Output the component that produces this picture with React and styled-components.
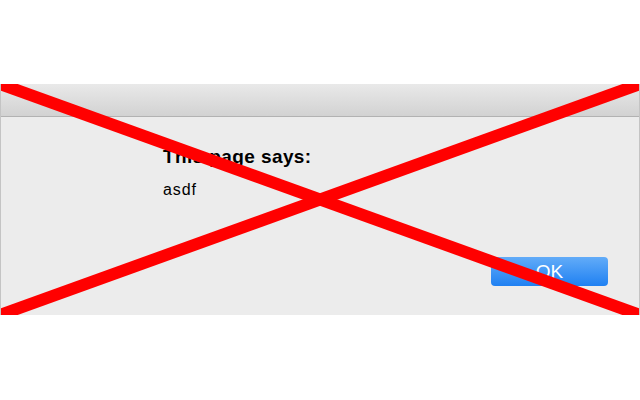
import React from 'react';
import styled, { createGlobalStyle } from 'styled-components';

const GlobalStyle = createGlobalStyle`
  html, body {
    margin: 0;
    padding: 0;
    background: #ffffff;
  }
  body {
    font-family: 'Liberation Sans', Arial, sans-serif;
  }
`;

const Page = styled.div`
  width: 640px;
  height: 400px;
  padding-top: 84px;
  box-sizing: border-box;
`;

const Dialog = styled.div`
  position: relative;
  width: 640px;
  height: 231px;
  display: flex;
  flex-direction: column;
  box-sizing: border-box;
  border-left: 1px solid #c4c4c4;
  border-right: 1px solid #c4c4c4;
  overflow: hidden;
`;

const TitleBar = styled.div`
  height: 32px;
  flex-shrink: 0;
  background: linear-gradient(#e9e9e9, #d2d2d2);
  border-bottom: 1px solid #b2b2b2;
`;

const Body = styled.div`
  flex: 1;
  display: flex;
  flex-direction: column;
  background: #ececec;
  padding: 29px 31px 29px 162px;
`;

const Title = styled.div`
  font-size: 19px;
  line-height: 22px;
  font-weight: 700;
  letter-spacing: 0.4px;
  color: #000000;
`;

const Message = styled.div`
  margin-top: 12px;
  font-size: 16px;
  line-height: 20px;
  letter-spacing: 0.9px;
  color: #000000;
`;

const OkButton = styled.button`
  margin-top: auto;
  align-self: flex-end;
  width: 117px;
  height: 29px;
  border: none;
  border-radius: 4px;
  background: linear-gradient(#62acf8, #1f80f2);
  color: #ffffff;
  font-family: 'Liberation Sans', Arial, sans-serif;
  font-size: 19px;
  line-height: 29px;
  padding: 0;
`;

const Cross = styled.svg`
  position: absolute;
  top: 0;
  left: -1px;
  width: 640px;
  height: 231px;
  pointer-events: none;
`;

export default function App() {
  return (
    <Page>
      <GlobalStyle />
      <Dialog>
        <TitleBar />
        <Body>
          <Title>This page says:</Title>
          <Message>asdf</Message>
          <OkButton>OK</OkButton>
        </Body>
        <Cross viewBox="0 0 640 231">
          <line x1="0" y1="0" x2="640" y2="231" stroke="#ff0000" strokeWidth="12" />
          <line x1="0" y1="231" x2="640" y2="0" stroke="#ff0000" strokeWidth="12" />
        </Cross>
      </Dialog>
    </Page>
  );
}
